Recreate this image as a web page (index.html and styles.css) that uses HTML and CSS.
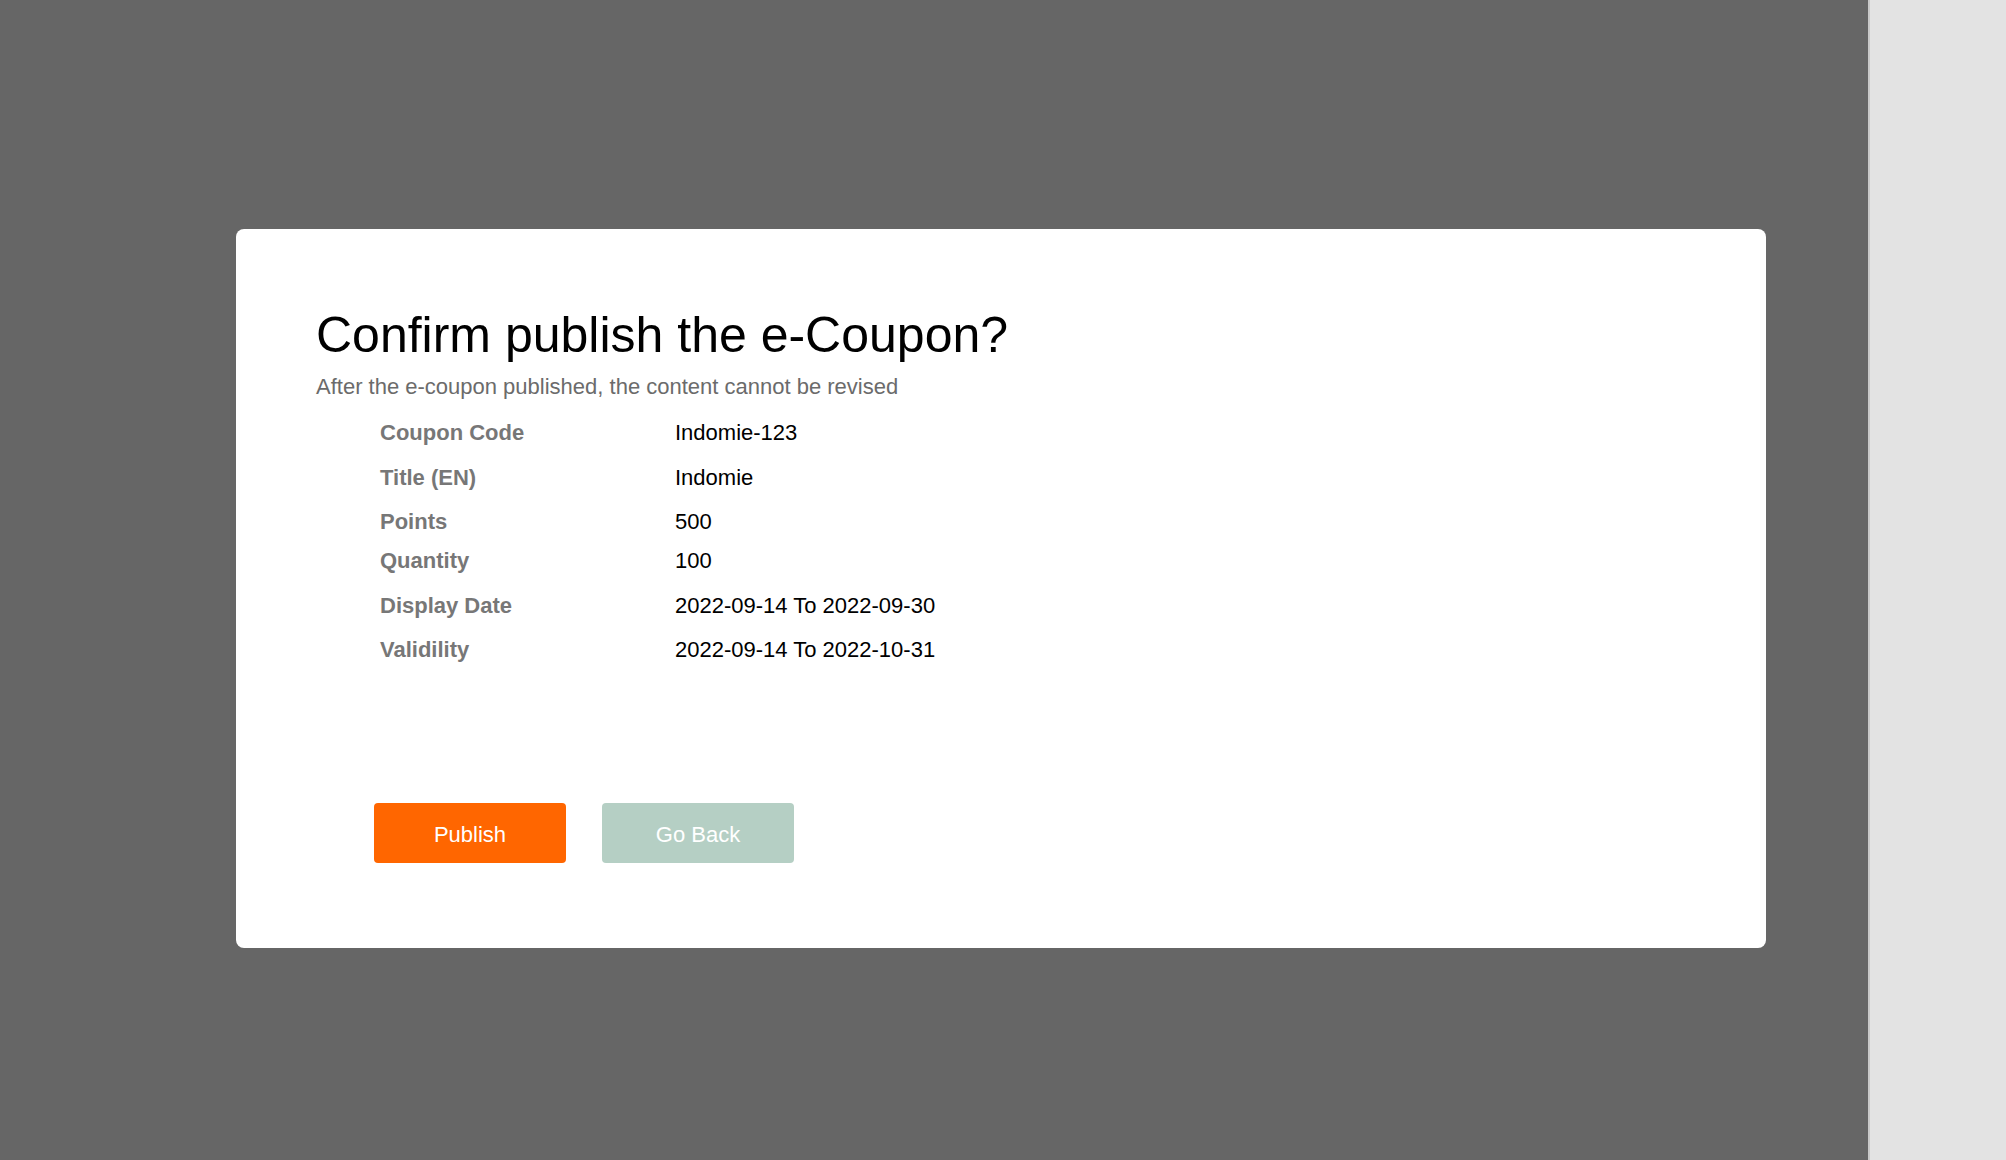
FILE: index.html
```html
<!DOCTYPE html>
<html lang="en">
<head>
  <meta charset="UTF-8">
  <meta name="viewport" content="width=device-width, initial-scale=1.0">
  <title>Confirm publish</title>
  <link rel="stylesheet" href="styles.css">
</head>
<body>
  <div class="layout">
    <div class="overlay">
      <div class="dialog">
        <h1 class="dialog-title">Confirm publish the e-Coupon?</h1>
        <p class="dialog-sub">After the e-coupon published, the content cannot be revised</p>

        <div class="details">
          <div class="row row-wide">
            <span class="label">Coupon Code</span>
            <span class="value">Indomie-123</span>
          </div>
          <div class="row">
            <span class="label">Title (EN)</span>
            <span class="value">Indomie</span>
          </div>
          <div class="row row-tight">
            <span class="label">Points</span>
            <span class="value">500</span>
          </div>
          <div class="row row-wide">
            <span class="label">Quantity</span>
            <span class="value">100</span>
          </div>
          <div class="row">
            <span class="label">Display Date</span>
            <span class="value">2022-09-14 To 2022-09-30</span>
          </div>
          <div class="row">
            <span class="label">Validility</span>
            <span class="value">2022-09-14 To 2022-10-31</span>
          </div>
        </div>

        <div class="actions">
          <button class="btn btn-publish">Publish</button>
          <button class="btn btn-back">Go Back</button>
        </div>
      </div>
    </div>
    <div class="sidebar"></div>
  </div>
</body>
</html>
```

FILE: styles.css
```css
html, body {
  margin: 0;
  height: 100%;
  font-family: "Liberation Sans", Arial, sans-serif;
}

.layout {
  display: flex;
  height: 100vh;
}

.overlay {
  width: 1870px;
  flex-shrink: 0;
  background: #666666;
  padding: 229px 0 0 236px;
  box-sizing: border-box;
  border-right: 2px solid #c9c9c9;
}

.sidebar {
  flex: 1;
  background: #e3e3e3;
}

.dialog {
  width: 1530px;
  height: 719px;
  box-sizing: border-box;
  background: #ffffff;
  border-radius: 8px;
  padding: 77px 80px 0 80px;
}

.dialog-title {
  margin: 0;
  font-size: 50px;
  line-height: 58px;
  font-weight: normal;
  color: #000000;
}

.dialog-sub {
  margin: 10px 0 0 0;
  font-size: 22px;
  line-height: 26px;
  color: #6b6b6b;
}

.details {
  margin: 20px 0 0 64px;
}

.row {
  display: flex;
  font-size: 22px;
  line-height: 26px;
  margin-bottom: 18px;
}

.row-wide {
  margin-bottom: 19px;
}

.row-tight {
  margin-bottom: 13px;
}

.row:last-child {
  margin-bottom: 0;
}

.label {
  width: 295px;
  font-weight: bold;
  color: #777777;
}

.value {
  color: #000000;
}

.actions {
  display: flex;
  gap: 36px;
  margin: 140px 0 0 58px;
}

.btn {
  width: 192px;
  height: 60px;
  padding: 4px 0 0 0;
  border: none;
  border-radius: 4px;
  font-family: "Liberation Sans", Arial, sans-serif;
  font-size: 22px;
  color: #ffffff;
  cursor: pointer;
}

.btn-publish {
  background: #ff6600;
}

.btn-back {
  background: #b5cfc4;
}
```
